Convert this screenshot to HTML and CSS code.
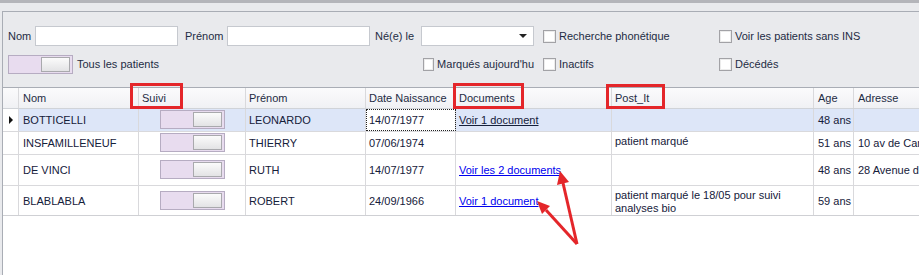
FILE: index.html
```html
<!DOCTYPE html>
<html lang="fr">
<head>
    <meta charset="UTF-8">
    <title>Patients</title>
    <link rel="stylesheet" href="styles.css">
</head>
<body>
    <div class="topbar"></div>
    <div class="filters">
        <div class="filter-row">
            <label class="lbl">Nom</label>
            <div class="txt"></div>
            <label class="lbl lbl-pad">Prénom</label>
            <div class="txt"></div>
            <label class="lbl lbl-pad2">Né(e) le</label>
            <div class="txt combo"><span class="caret"></span></div>
            <div class="chk-wrap"><span class="chk"></span>Recherche phonétique</div>
            <div class="chk-wrap chk-last"><span class="chk"></span>Voir les patients sans INS</div>
        </div>
        <div class="filter-row">
            <div class="span-left"><span class="toggle"><span class="knob"></span></span>Tous les patients</div>
            <div class="chk-wrap chk-marq"><span class="chk"></span>Marqués aujourd'hu</div>
            <div class="chk-wrap"><span class="chk"></span>Inactifs</div>
            <div class="chk-wrap chk-last"><span class="chk"></span>Décédés</div>
        </div>
    </div>
    <div class="grid">
        <div class="row head">
            <div class="cell"></div>
            <div class="cell">Nom</div>
            <div class="cell">Suivi</div>
            <div class="cell">Prénom</div>
            <div class="cell">Date Naissance</div>
            <div class="cell">Documents</div>
            <div class="cell">Post_It</div>
            <div class="cell">Age</div>
            <div class="cell">Adresse</div>
        </div>
        <div class="row sel h23">
            <div class="cell ind"><span class="arrow"></span></div>
            <div class="cell">BOTTICELLI</div>
            <div class="cell center"><span class="toggle"><span class="knob"></span></span></div>
            <div class="cell">LEONARDO</div>
            <div class="cell focus">14/07/1977</div>
            <div class="cell"><a class="doc dark">Voir 1 document</a></div>
            <div class="cell top"></div>
            <div class="cell">48 ans</div>
            <div class="cell"></div>
        </div>
        <div class="row h23">
            <div class="cell ind"></div>
            <div class="cell">INSFAMILLENEUF</div>
            <div class="cell center"><span class="toggle"><span class="knob"></span></span></div>
            <div class="cell">THIERRY</div>
            <div class="cell">07/06/1974</div>
            <div class="cell"></div>
            <div class="cell top">patient marqué</div>
            <div class="cell">51 ans</div>
            <div class="cell">10 av de Camargue</div>
        </div>
        <div class="row h31">
            <div class="cell ind"></div>
            <div class="cell">DE VINCI</div>
            <div class="cell center"><span class="toggle"><span class="knob"></span></span></div>
            <div class="cell">RUTH</div>
            <div class="cell">14/07/1977</div>
            <div class="cell"><a class="doc">Voir les 2 documents</a></div>
            <div class="cell top"></div>
            <div class="cell">48 ans</div>
            <div class="cell">28 Avenue de la Gare</div>
        </div>
        <div class="row h30 last">
            <div class="cell ind"></div>
            <div class="cell">BLABLABLA</div>
            <div class="cell center"><span class="toggle"><span class="knob"></span></span></div>
            <div class="cell">ROBERT</div>
            <div class="cell">24/09/1966</div>
            <div class="cell"><a class="doc">Voir 1 document</a></div>
            <div class="cell top">patient marqué le 18/05 pour suivi analyses bio</div>
            <div class="cell">59 ans</div>
            <div class="cell"></div>
        </div>
    </div>

    <div class="mark mark-suivi"></div>
    <div class="mark mark-docs"></div>
    <div class="mark mark-post"></div>
    <svg class="annot" width="919" height="275" viewBox="0 0 919 275">
        <line x1="577" y1="244" x2="563" y2="183" stroke="#e4262a" stroke-width="3"/>
        <polygon points="560,171 569,182 557,185" fill="#e4262a"/>
        <line x1="577" y1="244" x2="546" y2="210" stroke="#e4262a" stroke-width="3"/>
        <polygon points="537,201 550,206 542,214" fill="#e4262a"/>
    </svg>
</body>
</html>
```

FILE: styles.css
```css
* { margin: 0; padding: 0; box-sizing: border-box; }
body { width: 919px; height: 275px; overflow: hidden; background: #e9eaed; font-family: "Liberation Sans", Arial, sans-serif; font-size: 11px; color: #1e2c44; position: relative; }

.topbar { height: 3px; background: #b4b5ba; }

.filters { margin: 8px 0 0 2px; border-top: 1px solid #a9adb5; border-left: 1px solid #a9adb5; padding: 14px 0 13px 5px; }
.filter-row { display: grid; grid-template-columns: 27px 143px 49px 143px 51px 113px 185px 1fr; height: 20px; align-items: center; }
.filter-row + .filter-row { margin-top: 8px; }
.lbl { white-space: nowrap; }
.lbl-pad { padding-left: 7px; }
.lbl-pad2 { padding-left: 5px; }
.txt { height: 20px; background: #fff; border: 1px solid #c6c9cf; }
.combo { position: relative; height: 20px; margin-top: -1px; }
.caret { position: absolute; right: 6px; top: 7px; border-left: 4px solid transparent; border-right: 4px solid transparent; border-top: 4px solid #222; }
.chk-wrap { display: flex; align-items: center; padding-left: 9px; white-space: nowrap; }
.chk-last { padding-left: 0; }
.chk { width: 13px; height: 13px; border: 1px solid #a2a2a6; background: #fff; box-shadow: inset 0 0 0 1px #ececec; margin-right: 3px; }
.span-left { grid-column: 1 / 6; display: flex; align-items: center; gap: 4px; }
.chk-marq { padding-left: 2px; overflow: hidden; }

.toggle { display: inline-block; position: relative; width: 65px; height: 19px; background: #e8dcef; border: 1px solid #b6acc2; }
.knob { position: absolute; right: 2px; top: 1px; width: 29px; height: 15px; border: 1px solid #a9a9ad; background: linear-gradient(#fbfbfb, #e3e3e5); }

.grid { margin-left: 2px; height: 189px; background: #fff; border-top: 1px solid #a9adb5; border-left: 1px solid #a9adb5; }
.row { display: grid; grid-template-columns: 16px 120px 107px 120px 90px 156px 202px 40px 200px; height: 23px; border-bottom: 1px solid #d9d9dc; }
.row.head { height: 21px; background: linear-gradient(#fbfbfc, #f0f1f4); border-bottom-color: #d0d3d8; color: #1e2c44; }
.row.h31 { height: 31px; }
.row.h30 { height: 30px; }
.row.last { border-bottom-color: #cfd0d4; }
.cell { border-right: 1px solid #d9d9dc; padding: 0 3px; display: flex; align-items: center; white-space: nowrap; overflow: hidden; color: #15203a; }
.row.head .cell { color: #1e2c44; }
.cell:nth-child(2), .cell:nth-child(8), .cell:nth-child(9) { padding-left: 4px; }
.cell.center { justify-content: center; padding: 0 0 1px 1px; }
.cell.top { align-items: flex-start; padding-top: 3px; white-space: normal; line-height: 13px; }
.row.sel { background: #dde6f8; }
.cell.ind { background: #fff; position: relative; }
.row.sel .cell.ind { background: #fff; }
.arrow { position: absolute; left: 6px; top: 7px; border-top: 4px solid transparent; border-bottom: 4px solid transparent; border-left: 4px solid #111; }
.cell.focus { background: #fff; outline: 1px dotted #222; outline-offset: -1px; }
.doc { color: #0000ee; text-decoration: underline; cursor: pointer; }
.doc.dark { color: #15203a; }

.mark { position: absolute; border: 3px solid #e4262a; }
.mark-suivi { left: 130px; top: 83px; width: 53px; height: 26px; }
.mark-docs { left: 453px; top: 83px; width: 71px; height: 26px; }
.mark-post { left: 606px; top: 84px; width: 59px; height: 25px; }
.annot { position: absolute; left: 0; top: 0; pointer-events: none; }
```
